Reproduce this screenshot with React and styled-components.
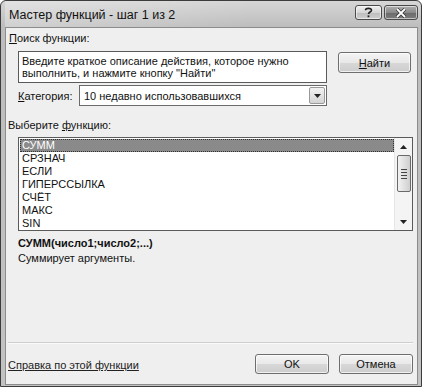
import React from 'react';
import styled, { createGlobalStyle } from 'styled-components';

const GlobalStyle = createGlobalStyle`
  html, body {
    margin: 0;
    padding: 0;
    background: #ffffff;
  }
  body {
    font-family: 'Liberation Sans', Arial, sans-serif;
    font-size: 11px;
    color: #111;
  }
`;

const Window = styled.div`
  width: 422px;
  height: 387px;
  box-sizing: border-box;
  border: 1px solid #3c3c3c;
  border-radius: 6px 6px 0 0;
  background: linear-gradient(to bottom, #d6d6d6 0, #bdbdbd 26px, #c2c2c2 100%);
  padding: 0 3px 1px 4px;
  display: flex;
  flex-direction: column;
`;

const TitleBar = styled.div`
  height: 26px;
  display: flex;
  align-items: center;
  padding-left: 4px;
  background: linear-gradient(to right, rgba(255,255,255,0.3), rgba(255,255,255,0) 60%);
`;

const Title = styled.div`
  flex: 1;
  font-size: 12.5px;
  color: #111;
  margin-top: 1px;
`;

const CaptionButtons = styled.div`
  display: flex;
  gap: 2px;
  align-self: flex-start;
  margin-top: 4px;
`;

const CaptionButton = styled.div`
  width: ${p => p.$w}px;
  height: 15px;
  box-sizing: border-box;
  border: 1px solid #4a4a4a;
  border-radius: 3px;
  display: flex;
  align-items: center;
  justify-content: center;
  box-shadow: inset 0 0 0 1px rgba(255,255,255,0.55);
  background: ${p => p.$dark
    ? 'linear-gradient(to bottom, #b0b0b0 0, #8a8a8a 50%, #6a6a6a 51%, #7c7c7c 100%)'
    : 'linear-gradient(to bottom, #f0f0f0 0, #d6d6d6 50%, #bdbdbd 51%, #cfcfcf 100%)'};
`;

const Content = styled.div`
  flex: 1;
  border: 1px solid #8c8c8c;
  background: #efefef;
  display: flex;
  flex-direction: column;
`;

const Label = styled.div`
  line-height: 14px;
  white-space: nowrap;
  margin-top: ${p => p.$top || 0}px;
  padding-left: ${p => p.$left || 0}px;
  font-weight: ${p => (p.$bold ? 'bold' : 'normal')};
`;

const U = styled.span`
  text-decoration: underline;
`;

const Row = styled.div`
  display: flex;
  align-items: ${p => p.$align || 'center'};
  margin-top: ${p => p.$top || 0}px;
  padding-left: 12px;
`;

const SearchBox = styled.div`
  width: 309px;
  height: 32px;
  box-sizing: border-box;
  border: 1px solid #5a5a5a;
  background: #fff;
  padding: 3px 0 0 3px;
  line-height: 12px;
  color: #111;
`;

const Button = styled.div`
  width: ${p => p.$w || 73}px;
  height: ${p => p.$h || 21}px;
  box-sizing: border-box;
  margin-left: ${p => p.$ml || 0}px;
  margin-top: ${p => p.$mt || 0}px;
  border: 1px solid #6e6e6e;
  border-radius: 3px;
  background: linear-gradient(to bottom, #f4f4f4 0, #e8e8e8 50%, #d8d8d8 51%, #cdcdcd 100%);
  box-shadow: inset 0 0 0 1px rgba(255,255,255,0.7);
  display: flex;
  align-items: center;
  justify-content: center;
  color: #111;
`;

const CategoryLabel = styled.div`
  width: 61px;
  white-space: nowrap;
`;

const Select = styled.div`
  width: 248px;
  height: 21px;
  box-sizing: border-box;
  border: 1px solid #6a6a6a;
  background: #fff;
  display: flex;
  align-items: center;
  padding-left: 4px;
`;

const SelectText = styled.div`
  flex: 1;
`;

const DropButton = styled.div`
  width: 16px;
  height: 17px;
  margin-right: 1px;
  box-sizing: border-box;
  border: 1px solid #9a9a9a;
  border-radius: 2px;
  background: linear-gradient(to bottom, #f2f2f2, #d4d4d4);
  display: flex;
  align-items: center;
  justify-content: center;
`;

const ListBox = styled.div`
  width: 395px;
  height: 94px;
  box-sizing: border-box;
  margin: 5px 0 0 12px;
  border: 1px solid #5a5a5a;
  background: #fff;
  display: flex;
`;

const Items = styled.div`
  flex: 1;
  padding: 1px 0 0 1px;
`;

const Item = styled.div`
  height: 13px;
  line-height: 13px;
  padding-left: 2px;
  box-sizing: border-box;
  color: ${p => (p.$selected ? '#fff' : '#111')};
  background: ${p => (p.$selected ? '#8a8a8a' : 'transparent')};
  outline: ${p => (p.$selected ? '1px dotted #333' : 'none')};
  outline-offset: -1px;
`;

const ScrollBar = styled.div`
  width: 17px;
  display: flex;
  flex-direction: column;
  align-items: center;
  background: #f4f4f4;
  border-left: 1px solid #e6e6e6;
`;

const ScrollArrow = styled.div`
  height: 17px;
  display: flex;
  align-items: center;
  justify-content: center;
`;

const Thumb = styled.div`
  width: 14px;
  height: 37px;
  box-sizing: border-box;
  border: 1px solid #6a6a6a;
  border-radius: 2px;
  background: linear-gradient(to right, #f2f2f2, #cfcfcf);
  display: flex;
  flex-direction: column;
  align-items: center;
  justify-content: center;
  gap: 2px;
`;

const Grip = styled.div`
  width: 6px;
  height: 1px;
  background: #444;
`;

const Spacer = styled.div`
  flex: 1;
`;

const Separator = styled.div`
  height: 1px;
  margin: 0 4px 0 2px;
  background: #cfcfcf;
  border-bottom: 1px solid #fafafa;
`;

const Footer = styled.div`
  display: flex;
  align-items: center;
  padding: 10px 4px 10px 2px;
`;

const HelpLink = styled.div`
  flex: 1;
  text-decoration: underline;
  color: #222;
  margin-top: 2px;
`;

const Triangle = ({ down = true, size = 7 }) => (
  <svg width={size} height={4} viewBox="0 0 7 4">
    <path d={down ? 'M0 0 L7 0 L3.5 4 Z' : 'M0 4 L7 4 L3.5 0 Z'} fill="#222" />
  </svg>
);

const items = ['СУММ', 'СРЗНАЧ', 'ЕСЛИ', 'ГИПЕРССЫЛКА', 'СЧЁТ', 'МАКС', 'SIN'];

export default function App() {
  return (
    <>
      <GlobalStyle />
      <Window>
        <TitleBar>
          <Title>Мастер функций - шаг 1 из 2</Title>
          <CaptionButtons>
            <CaptionButton $w={27}>
              <svg width="9" height="11" viewBox="0 0 9 11">
                <path d="M1.5 3.2 C1.5 1 7.5 0.6 7.5 3.2 C7.5 5 4.5 5 4.5 7" fill="none" stroke="#222" strokeWidth="1.6" />
                <rect x="3.6" y="8.4" width="1.8" height="1.8" fill="#222" />
              </svg>
            </CaptionButton>
            <CaptionButton $w={34} $dark>
              <svg width="12" height="10" viewBox="0 0 12 10">
                <path d="M2 1 L10 9 M10 1 L2 9" stroke="#333" strokeWidth="3.4" />
                <path d="M2 1 L10 9 M10 1 L2 9" stroke="#fff" strokeWidth="1.8" />
              </svg>
            </CaptionButton>
          </CaptionButtons>
        </TitleBar>
        <Content>
          <Label $top={3} $left={3}><U>П</U>оиск функции:</Label>
          <Row $top={6} $align="flex-start">
            <SearchBox>
              Введите краткое описание действия, которое нужно
              <br />
              выполнить, и нажмите кнопку "Найти"
            </SearchBox>
            <Button $ml={11} $mt={1}><U>Н</U>айти</Button>
          </Row>
          <Row $top={2}>
            <CategoryLabel><U>К</U>атегория:</CategoryLabel>
            <Select>
              <SelectText>10 недавно использовавшихся</SelectText>
              <DropButton><Triangle /></DropButton>
            </Select>
          </Row>
          <Label $top={12} $left={2}>Выберите <U>ф</U>ункцию:</Label>
          <ListBox>
            <Items>
              {items.map((name, i) => (
                <Item key={name} $selected={i === 0}>{name}</Item>
              ))}
            </Items>
            <ScrollBar>
              <ScrollArrow><Triangle down={false} /></ScrollArrow>
              <Thumb>
                <Grip />
                <Grip />
                <Grip />
                <Grip />
              </Thumb>
              <Spacer />
              <ScrollArrow><Triangle /></ScrollArrow>
            </ScrollBar>
          </ListBox>
          <Label $top={5} $left={12} $bold>СУММ(число1;число2;...)</Label>
          <Label $top={1} $left={12}>Суммирует аргументы.</Label>
          <Spacer />
          <Separator />
          <Footer>
            <HelpLink>Справка по этой функции</HelpLink>
            <Button $w={74} $h={20}>OK</Button>
            <Button $w={74} $h={20} $ml={10}>Отмена</Button>
          </Footer>
        </Content>
      </Window>
    </>
  );
}
